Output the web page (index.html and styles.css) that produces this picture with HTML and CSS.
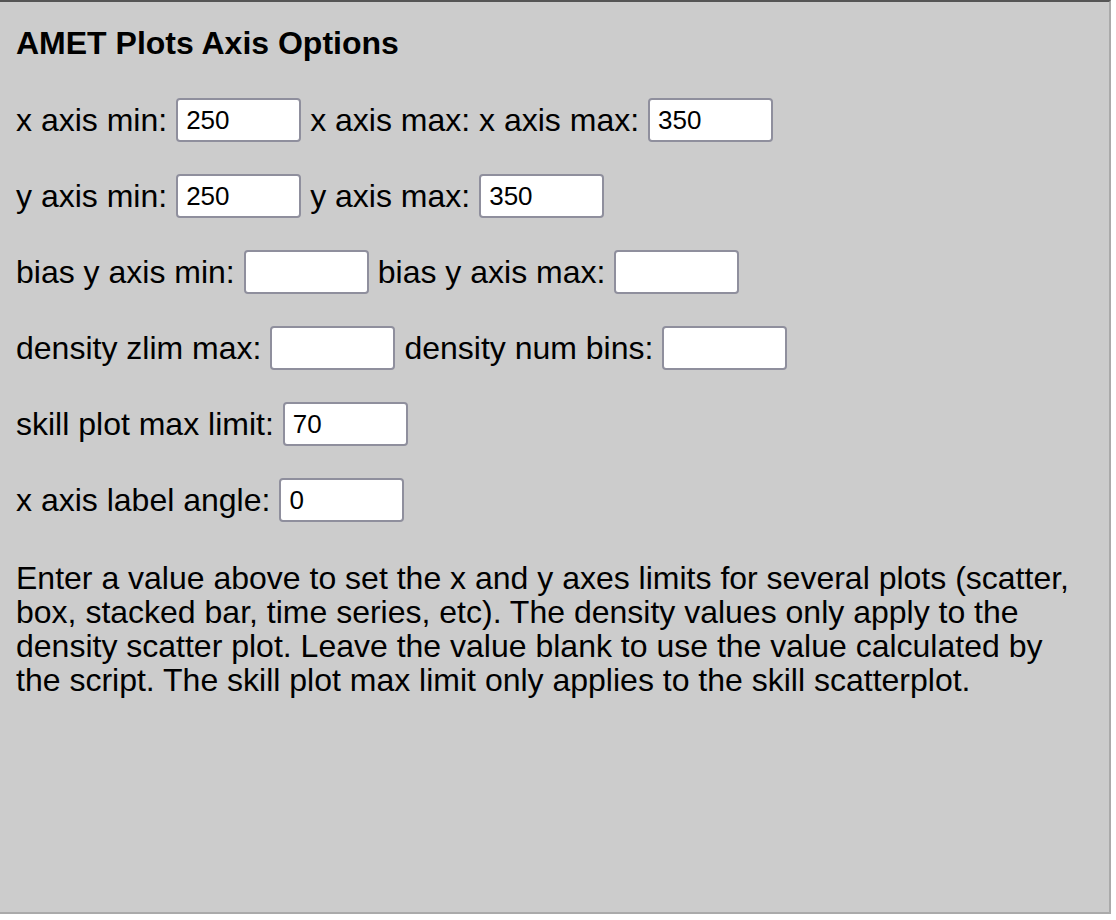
FILE: index.html
```html
<!DOCTYPE html>
<html lang="en">
<head>
    <meta charset="UTF-8">
    <title>AMET Plots Axis Options</title>
    <link rel="stylesheet" href="styles.css">
</head>
<body>
    <div class="panel">
        <div class="panel-title">AMET Plots Axis Options</div>

        <div class="row">
            <label>x axis min:</label>
            <input type="text" class="field" value="250">
            <label>x axis max: x axis max:</label>
            <input type="text" class="field" value="350">
        </div>

        <div class="row">
            <label>y axis min:</label>
            <input type="text" class="field" value="250">
            <label>y axis max:</label>
            <input type="text" class="field" value="350">
        </div>

        <div class="row">
            <label>bias y axis min:</label>
            <input type="text" class="field" value="">
            <label>bias y axis max:</label>
            <input type="text" class="field" value="">
        </div>

        <div class="row">
            <label>density zlim max:</label>
            <input type="text" class="field" value="">
            <label>density num bins:</label>
            <input type="text" class="field" value="">
        </div>

        <div class="row">
            <label>skill plot max limit:</label>
            <input type="text" class="field" value="70">
        </div>

        <div class="row">
            <label>x axis label angle:</label>
            <input type="text" class="field" value="0">
        </div>

        <p class="help">Enter a value above to set the x and y axes limits for several plots (scatter, box, stacked bar, time series, etc). The density values only apply to the density scatter plot. Leave the value blank to use the value calculated by the script. The skill plot max limit only applies to the skill scatterplot.</p>
    </div>
</body>
</html>
```

FILE: styles.css
```css
* {
    margin: 0;
    padding: 0;
    box-sizing: border-box;
    font-family: 'Liberation Sans', Arial, Helvetica, sans-serif;
}

body {
    background-color: #fff;
    color: #000;
}

.panel {
    width: 1113px;
    height: 914px;
    margin-left: -2px;
    padding: 23px 14px 0 16px;
    background-color: #cccccc;
    border: 2px solid #aaa;
    border-top-color: #555;
    border-left-color: #555;
}

.panel-title {
    font-size: 32px;
    font-weight: bold;
    line-height: 37px;
    margin-bottom: 36px;
}

.row {
    display: flex;
    align-items: center;
    gap: 9px;
    height: 44px;
    margin-bottom: 32px;
    font-size: 32px;
}

.field {
    width: 125px;
    height: 44px;
    padding: 2px 8px;
    font-size: 26px;
    color: #000;
    background-color: #fff;
    border: 2px solid #8f8f9d;
    border-radius: 4px;
}

.help {
    margin-top: 39px;
    font-size: 32px;
    line-height: 34px;
}
```
